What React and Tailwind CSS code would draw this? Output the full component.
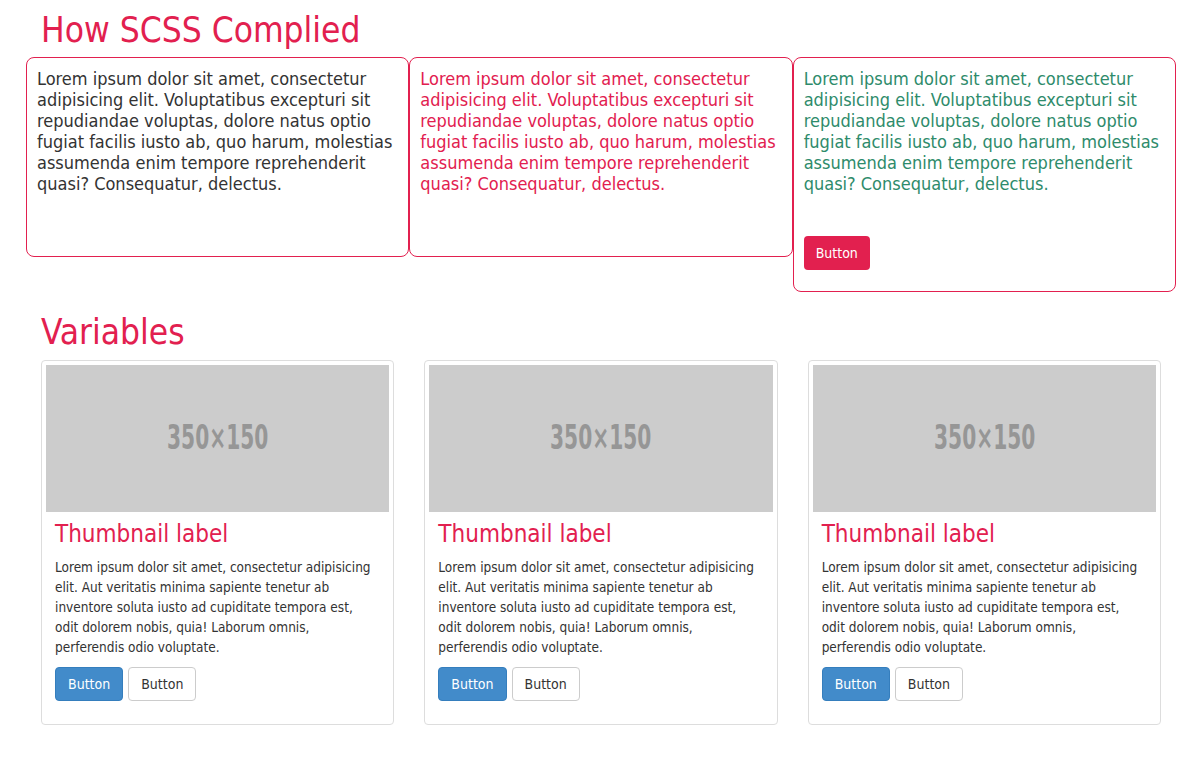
import React from 'react';

const lorem =
  'Lorem ipsum dolor sit amet, consectetur adipisicing elit. Voluptatibus excepturi sit repudiandae voluptas, dolore natus optio fugiat facilis iusto ab, quo harum, molestias assumenda enim tempore reprehenderit quasi? Consequatur, delectus.';

const caption =
  'Lorem ipsum dolor sit amet, consectetur adipisicing elit. Aut veritatis minima sapiente tenetur ab inventore soluta iusto ad cupiditate tempora est, odit dolorem nobis, quia! Laborum omnis, perferendis odio voluptate.';

function Thumbnail() {
  return (
    <div className="px-[15px]">
      <div className="border border-[#dddddd] rounded-[4px] p-[4px] bg-white">
        <div className="h-[147px] bg-[#cccccc] flex items-center justify-center">
          <span className="text-[34px] font-bold text-[#969696] leading-none scale-x-[0.66] -translate-y-[2px] font-['DejaVu_Sans_Condensed','Liberation_Sans_Narrow',sans-serif]">
            350×150
          </span>
        </div>
        <div className="px-[9px] pt-[9px] pb-[19px]">
          <h3 className="text-[24px] leading-[26px] text-[#e2204f] mt-[0px] mb-[10px]">Thumbnail label</h3>
          <p className="text-[13.5px] leading-[20px] text-[#333333] mb-[10px] pr-[6px]">{caption}</p>
          <div className="flex gap-[5px]">
            <button className="h-[34px] px-[12px] rounded-[4px] bg-[#428bca] border border-[#357ebd] text-white text-[14px]">
              Button
            </button>
            <button className="h-[34px] px-[12px] rounded-[4px] bg-white border border-[#cccccc] text-[#333333] text-[14px]">
              Button
            </button>
          </div>
        </div>
      </div>
    </div>
  );
}

export default function App() {
  return (
    <div className="min-h-screen bg-white font-['DejaVu_Sans_Condensed','DejaVu_Sans',sans-serif] [font-stretch:condensed]">
      <div className="w-[1150px] ml-[26px] px-[15px]">
        {/* How SCSS Complied */}
        <h1 className="text-[35px] leading-[40px] text-[#e2204f] mt-[10px] mb-[7px]">How SCSS Complied</h1>
        <div className="-mx-[15px] grid grid-cols-3 items-start">
          <div className="h-[200px] border border-[#e2204f] rounded-[8px] px-[10px] pt-[10px] text-[18px] leading-[21px] text-[#333333]">
            {lorem}
          </div>
          <div className="h-[200px] border border-[#e2204f] rounded-[8px] px-[10px] pt-[10px] text-[18px] leading-[21px] text-[#e2204f]">
            {lorem}
          </div>
          <div className="h-[235px] border border-[#e2204f] rounded-[8px] px-[10px] pt-[10px] text-[18px] leading-[21px] text-[#2e8b6b]">
            <p>{lorem}</p>
            <button className="mt-[42px] h-[34px] px-[12px] rounded-[4px] bg-[#e2204f] text-white text-[14px] leading-[20px]">
              Button
            </button>
          </div>
        </div>

        {/* Variables */}
        <h1 className="text-[35px] leading-[40px] text-[#e2204f] mt-[20px] mb-[8px]">Variables</h1>
        <div className="-mx-[15px] grid grid-cols-3">
          <Thumbnail />
          <Thumbnail />
          <Thumbnail />
        </div>
      </div>
    </div>
  );
}
